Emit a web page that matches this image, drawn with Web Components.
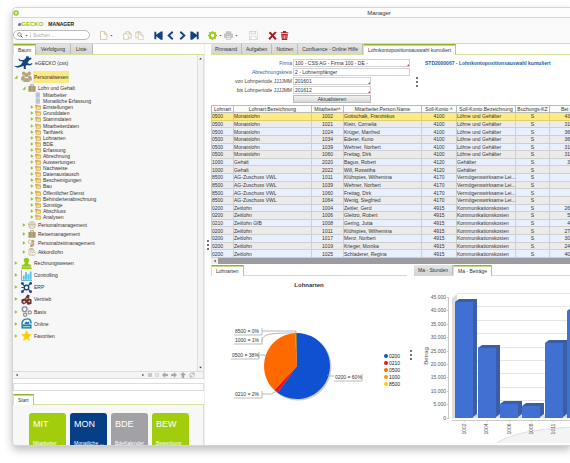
<!DOCTYPE html>
<html lang="de">
<head>
<meta charset="utf-8">
<title>Manager</title>
<style>
html,body{margin:0;height:100%}
body{font:5px/6px "Liberation Sans",Arial,sans-serif;color:#333;background:#fff;overflow:hidden;
 --green:#a2cd0c;--line:#d5e39a;--navy:#14437f;--grey:#d9d9d9}
</style>
</head>
<body>
<gecko-manager></gecko-manager>
<script>
const define=(name,html,setup)=>customElements.define(name,class extends HTMLElement{
  constructor(){super();this.attachShadow({mode:'open'})}
  connectedCallback(){
    if(this.ready)return;this.ready=true;
    this.shadowRoot.innerHTML='<style>*{box-sizing:border-box}button,input{font:inherit;color:inherit;margin:0;padding:0;border-radius:0}[hidden]{display:none}</style>'+(typeof html==='function'?html(this):html);
    if(setup)setup(this);
  }
});

const N='fill="#14437f"',T='#b5a67c';
const ICONS={
  logo:'<circle cx="12" cy="12" r="11" fill="#8fc31f"/><circle cx="12" cy="12" r="4.5" fill="#eef7d4"/><path d="M12 3v4M12 17v4M3 12h4M17 12h4" stroke="#d6ec98" stroke-width="3"/>',
  search:'<circle cx="10" cy="10" r="7" fill="none" stroke="#555" stroke-width="2.5"/><path d="M15 15l7 7" stroke="#555" stroke-width="4"/>',
  caret:'<path d="M3 8h18l-9 10z" fill="#555"/>',
  doc:'<path d="M4 1h10l7 8v14H4zM14 1v8h7" fill="#fff" stroke="#c5b586" stroke-width="1.8"/>',
  copy:'<path d="M2 7h7l5 5v10H2z" fill="#fff" stroke="#c5b586" stroke-width="1.8"/><path d="M8 7V2h8l6 6v11h-8M16 2v6h6" fill="none" stroke="#c5b586" stroke-width="1.8"/>',
  paste:'<path d="M9 18H2V3h14v4M6 1h6v4H6z" fill="none" stroke="#cfc4a2" stroke-width="1.8"/><path d="M9 8h7l6 5v10H9zM16 8v5h6" fill="#fff" stroke="#cfc4a2" stroke-width="1.8"/>',
  first:`<path d="M1 2h5v8L18 1h5v22h-5L6 14v8H1z" ${N}/>`,
  prev:'<path d="M18 2L7 12l11 10" fill="none" stroke="#14437f" stroke-width="5"/>',
  next:'<path d="M6 2l11 10L6 22" fill="none" stroke="#14437f" stroke-width="5"/>',
  last:`<path d="M23 2h-5v8L6 1H1v22h5l12-9v8h5z" ${N}/>`,
  gear:'<circle cx="12" cy="12" r="7" fill="none" stroke="#9acb10" stroke-width="5"/><path d="M12 0v5M12 19v5M0 12h5M19 12h5M3.500 3.500l4 4M16.500 16.500l4 4M3.500 20.500l4-4M16.500 7.500l4-4" stroke="#9acb10" stroke-width="4"/>',
  print:'<path d="M6 8V2h12v6M6 17H1V8h22v9h-5" fill="#ccc" stroke="#b5b5b5" stroke-width="2"/><path d="M6 13h12v9H6zM8 17h8" fill="#fff" stroke="#aaa" stroke-width="1.700"/>',
  save:'<path d="M1 1h18l4 4v18H1zM6 1v7h11V1M5 23v-9h14v9" fill="#fff" stroke="#c6c6c6" stroke-width="1.800"/>',
  cross:'<path d="M2 5l4-4 6 7 7-7 4 3-8 8 8 8-4 4-7-8-7 8-4-4 8-8z" fill="#a8141c"/>',
  trash:'<path d="M3 8h18l-2 16H5zM2 3h20v3H2zM8 0h8v3H8z" fill="#b01e26"/><path d="M8 11v10M12 11v10M16 11v10" stroke="#fff" stroke-width="1.500"/>',
  gecko:'<path d="M0 19c5 2 10 1 14-2l4-6-7-1-2-4 1-1 3 3 6 0 4-3 2-5 2 1 2-1 1 4 4-1 1 3-5 3-3 5 5 2 4-2 1 2-5 3-7-1-2 4 1 4-3 1-2-3 1-4-5 1c-5 3-11 3-15-2z" fill="#17457f"/>',
  people:`<g fill="${T}"><circle cx="6" cy="5" r="4"/><circle cx="18" cy="5" r="4"/><circle cx="12" cy="9" r="4.500"/><path d="M0 20c0-6 2-10 6-10l3 4-4 7zM24 20c0-6-2-10-6-10l-3 4 4 7zM5 24c0-6 2-9 7-9s7 3 7 9z"/></g>`,
  bag:`<path d="M1 6h22v17H1z" fill="${T}"/><path d="M8 6V2h8v4M6 6v17M18 6v17" fill="none" stroke="#8f825c" stroke-width="2"/>`,
  page:'<path d="M4 3h14v18H4z" fill="#dce5ef" stroke="#8fa0b5" stroke-width="2"/><path d="M7 8h8M7 12h8M7 16h8" stroke="#6682a5" stroke-width="1.800"/>',
  folder:'<path d="M1 4h8l3 3h10v14H5z" fill="#e3b250" stroke="#b8862e" stroke-width="1.500"/><path d="M6 10h17l-3 12H5z" fill="#f7dc8c" stroke="#c5963d"/>',
  team:`<g fill="none" stroke="${T}" stroke-width="2"><circle cx="12" cy="12" r="10.500"/><circle cx="12" cy="8" r="3"/><circle cx="6" cy="11" r="2"/><circle cx="18" cy="11" r="2"/><path d="M6 20c1-8 11-8 12 0"/></g>`,
  time:`<circle cx="14" cy="7" r="5" fill="${T}"/><path d="M6 24c0-10 5-12 13-11v6l-6 5z" fill="${T}"/><circle cx="6" cy="8" r="5" fill="#fff" stroke="${T}" stroke-width="2"/>`,
  clip:`<path d="M3 3h14v18H3zM7 1h6v4H7z" fill="#fff" stroke="${T}" stroke-width="2"/><circle cx="17" cy="17" r="5" fill="#fff" stroke="${T}" stroke-width="2"/><path d="M6 9h8M6 13h5" stroke="${T}" stroke-width="2"/>`,
  stamp:'<path d="M12 0c7 0 7 6 4 10-1 3 0 4 6 5v4H2v-4c6-1 7-2 6-5C5 6 5 0 12 0zM1 20h22v4H1z" fill="#94c90d"/>',
  chart:'<path d="M1 0v23h23" fill="none" stroke="#45b8dc" stroke-width="2"/><path d="M4 12h4v9H4zM9 5h4v16H9zM14 9h4v12h-4zM19 3h4v18h-4z" fill="#58c1e2"/>',
  erp:'<path d="M2 3l7 7M22 2l-7 7M2 22l7-7M22 22l-7-7M1 12h5" stroke="#1d4386" stroke-width="2.500"/><circle cx="12" cy="12" r="5" fill="#fff" stroke="#1d4386" stroke-width="3"/><g fill="#1d4386"><circle cx="3" cy="3" r="3"/><circle cx="21" cy="3" r="3"/><circle cx="3" cy="21" r="3"/><circle cx="21" cy="21" r="3"/></g>',
  sales:'<path d="M1 12l8-3 5-8 5 2-2 6 6 3v9l-8 3-3-5-6 4-5-4z" fill="#6b2f2a"/><circle cx="7" cy="17" r="2.500" fill="#e5d2ce"/><circle cx="18" cy="16" r="2" fill="#e5d2ce"/><path d="M10 11l6-1" stroke="#fff" stroke-width="1.500"/>',
  gears:'<g fill="none" stroke="#8b8f94" stroke-width="2.500"><circle cx="8" cy="7" r="5"/><circle cx="19" cy="14" r="3.500"/><circle cx="9" cy="19" r="3.500"/></g><circle cx="8" cy="7" r="7" fill="none" stroke="#8b8f94" stroke-width="1.500" stroke-dasharray="2 2"/>',
  online:'<path d="M2 14C2 4 8 2 14 2c5 0 8 4 8 10" fill="none" stroke="#1580a8" stroke-width="3"/><path d="M1 14h22v9H1z" fill="#1580a8"/><path d="M7 13l4-6 3 3 4-3v6" fill="#1580a8"/><path d="M4 19h16" stroke="#d6eef6" stroke-width="2"/>',
  star:'<path d="M12 0l3.600 8.500 8.400.7-6.500 5.800L19.600 24 12 19l-7.600 5 2.100-9L0 9.200l8.400-.7z" fill="#fdd000"/>',
  left:'<path d="M1 12L11 2v6h12v8H11v6z" fill="#aaa" stroke="#888"/>',
  right:'<path d="M23 12L13 2v6H1v8h12v6z" fill="#aaa" stroke="#888"/>',
  up:'<path d="M12 1l10 11h-6v11H8V12H2z" fill="#aaa" stroke="#888"/>',
  sync:'<path d="M7 20C0 14 3 4 12 3M17 4c7 6 4 14-3 17M9 14v7H3M15 10V3h6" fill="none" stroke="#999" stroke-width="2.500"/>',
  plus:'<path d="M3 3h18v18H3zM7 12h10M12 7v10" fill="#ddd" stroke="#888" stroke-width="2"/>',
  minus:'<path d="M3 3h18v18H3zM7 12h10" fill="#eee" stroke="#aaa" stroke-width="2"/>',
  triL:'<path d="M16 4v16L6 12z" fill="#333"/>',triR:'<path d="M8 4v16l10-8z" fill="#333"/>',
  triU:'<path d="M2 19h20L12 5z" fill="#333"/>',triD:'<path d="M2 5h20l-10 14z" fill="#333"/>',
  closed:'<path d="M5 1v22l16-11z" fill="#8fc31f"/>',open:'<path d="M21 2v20H2z" fill="#8fc31f"/>'
};
define('g-icon',el=>{
  const n=el.getAttribute('name');
  return `<style>:host{display:block;flex:none;width:6px;height:6px}svg{display:block;width:100%;height:100%}</style><svg viewBox="0 0 ${n==='gecko'?36:24} ${n==='gecko'?26:24}" aria-hidden="true">${ICONS[n]}</svg>`;
});

define('tool-button',el=>`<style>:host{display:flex;align-items:center}button{border:0;background:none;width:12px;height:12px;display:grid;place-items:center}
 g-icon{width:9px;height:9px}.c{width:4px}.c g-icon{width:3px;height:3px}</style>
 <button aria-label="${el.getAttribute('label')}"><g-icon name="${el.getAttribute('icon')}"></g-icon></button>${el.hasAttribute('menu')?'<button class="c" aria-label="Menü"><g-icon name="caret"></g-icon></button>':''}`);

define('tab-bar',el=>{
  const a=+el.getAttribute('active');
  return `<style>:host{display:block;flex:none}div{display:flex;height:11px;border-bottom:1px solid var(--line)}
  button{border:0;border-right:1px solid #bbb;background:linear-gradient(#e4e4e4,#d4d4d4);padding:0 var(--tp,4px);height:10px;white-space:nowrap;color:#333}
  .on{background:#fff;border-top:1px solid #8fb52a;border-left:1px solid #ddd;height:11px;padding:0 4px;box-shadow:inset 0 1px #c5d98b}</style>
  <div role="tablist">${el.getAttribute('tabs').split('|').map((t,i)=>`<button role="tab" aria-selected="${i===a}" class="${i===a?'on':''}">${t}</button>`).join('')}</div>`;
});

define('tree-node',el=>{
  const s=el.getAttribute('state');
  return `<style>:host{display:flex;align-items:center;min-height:0;white-space:nowrap}
  .t{width:4px;height:4px;margin-right:var(--tg,4px);visibility:${s?'visible':'hidden'}}
  .i{width:var(--is,6px);height:var(--is,6px);margin-right:2px}
  :host([wide]) .i{width:20px;height:13px}:host([wide]) .t{display:none}
  span{line-height:6px}:host([selected]) span{background:#fbe983;line-height:12px;margin-left:-1px;padding:0 1px}</style>
  <g-icon class="t" name="${s||'closed'}"></g-icon><g-icon class="i" name="${el.getAttribute('icon')}"></g-icon><span><slot></slot></span>`;
});

const list=(items)=>items.map(([i,t,s='closed'])=>`<tree-node icon="${i}" state="${s}">${t}</tree-node>`).join('');
define('nav-tree',`<style>:host{display:flex;flex:1;min-height:0;background:#f7f7f7}
 .m{flex:1;min-width:0;overflow:hidden;border-right:1px solid #ddd}
 .v{width:6px;display:flex;flex-direction:column;justify-content:space-between;align-items:center;padding:2px 0;background:#f3f3f3;border-right:1px solid #ddd}
 .v g-icon{width:3px;height:3px}
 .a{display:grid;grid-auto-rows:1fr}
 .root{height:15px;--is:12px}.l1{padding-left:1px;--is:11px;--tg:3px}.one{height:13px}.l2{padding-left:9px;--is:8px;--tg:2px}.lg{height:9px}
 .l3{height:128px;padding-left:17px;--is:6px;--tg:1px}.l2b{height:37px}.l1b{height:85px}</style>
 <div class="m">
 <tree-node class="root" icon="gecko" wide>eGECKO (css)</tree-node>
 <tree-node class="l1 one" icon="people" state="open" selected>Personalwesen</tree-node>
 <tree-node class="l2 lg" icon="bag" state="open">Lohn und Gehalt</tree-node>
 <div class="a l3">${list([['page','Mitarbeiter',''],['page','Monatliche Erfassung',''],...'Einstellungen,Grunddaten,Stammdaten,Mitarbeiterdaten,Tarifwerk,Lohnarten,BDE,Erfassung,Abrechnung,Auswertungen,Nachweise,Datenaustausch,Bescheinigungen,Bau,Öffentlicher Dienst,Behindertenabrechnung,Sonstige,Abschluss,Analysen'.split(',').map(t=>['folder',t])])}</div>
 <div class="a l2 l2b">${list([['team','Personalmanagement'],['bag','Reisemanagement'],['time','Personalzeitmanagement'],['clip','Akkordlohn']])}</div>
 <div class="a l1 l1b">${list([['stamp','Rechnungswesen'],['chart','Controlling'],['erp','ERP'],['sales','Vertrieb'],['gears','Basis'],['online','Online'],['star','Favoriten']])}</div>
 </div><div class="v"><g-icon name="triU"></g-icon><g-icon name="triD"></g-icon></div>`);

define('start-tile',`<style>:host{display:flex;flex-direction:column;justify-content:space-between;width:37px;height:33px;padding:6px 3px 0 4px;box-sizing:border-box;border-radius:3px 3px 0 0;background:var(--tile,#a2cd0c);color:#fff;overflow:hidden;white-space:nowrap}
 b{font:9px/10px "Liberation Sans",Arial,sans-serif}</style><b><slot name="code"></slot></b><span><slot></slot></span>`);

define('drag-dots',`<style>:host{display:grid;place-content:center;gap:2px}i{width:2px;height:2px;background:#444;border-radius:1px}</style><i></i><i></i><i></i>`);

define('form-row',el=>`<style>:host{display:flex;align-items:center;height:8px}label{width:81px;text-align:right;margin-right:1px;white-space:nowrap;color:var(--lc,#444)}
 div{position:relative;width:var(--w,117px)}input{display:block;width:100%;height:8px;border:1px solid #d2d2d2;padding:0 1px;background:#fff;color:#333;outline:0}
 i{position:absolute;right:1px;bottom:1px;border:1px solid #d33;border-top-color:transparent;border-left-color:transparent}</style>
 <label for="f">${el.getAttribute('label')}</label><div><input id="f" value="${el.getAttribute('value')}">${el.hasAttribute('required')?'<i></i>':''}</div>`);

const LG='Löhne und Gehälter',VL='Vermögenswirksame Lei...',KK='Kommunikationskosten';
const ROWS=[
 ['0500','Monatslohn','1002','Gottschalk, Franziskus','4100',LG,'43'],['0500','Monatslohn','1021','Klein, Cornelia','4100',LG,'31'],
 ['0500','Monatslohn','1024','Krüger, Manfred','4100',LG,'36'],['0500','Monatslohn','1034','Ederer, Kuno','4100',LG,'36'],
 ['0500','Monatslohn','1039','Wehner, Norbert','4100',LG,'31'],['0500','Monatslohn','1060','Freitag, Dirk','4100',LG,'31'],
 ['1000','Gehalt','2020','Bagus, Robert','4120','Gehälter','3'],['1000','Gehalt','2022','Will, Roswitha','4120','Gehälter',''],
 ['8500','AG-Zuschuss VWL','1011','Klühspies, Wilhemina','4170',VL,''],['8500','AG-Zuschuss VWL','1039','Wehner, Norbert','4170',VL,''],
 ['8500','AG-Zuschuss VWL','1060','Freitag, Dirk','4170',VL,''],['8500','AG-Zuschuss VWL','1064','Wenig, Siegfried','4170',VL,''],
 ['0200','Zeitlohn','1004','Zeitler, Gerd','4915',KK,'26'],['0200','Zeitlohn','1006','Gleitzo, Robert','4915',KK,'5'],
 ['0210','Zeitlohn GfB','1008','Gering, Jutta','4915',KK,'4'],['0200','Zeitlohn','1011','Klühspies, Wilhemina','4915',KK,'27'],
 ['0200','Zeitlohn','1017','Menz, Norbert','4915',KK,'30'],['0200','Zeitlohn','1019','Krieger, Monika','4915',KK,'24'],
 ['0200','Zeitlohn','1025','Schladerer, Regina','4915',KK,'40']];
define('wage-table',`<style>:host{display:block;flex:none}
 table{table-layout:fixed;width:100%;height:153px;border-collapse:separate;border-spacing:0}
 th,td{padding:0;border:0 solid #cfcfcf;border-right-width:1px;border-bottom-width:1px;white-space:nowrap;line-height:6px;font-weight:400;text-align:left}
 th{height:8px;text-align:center;border-color:#bbb;border-top-width:1px;background:#fbfbfb}
 th:first-child,td:first-child{border-left-width:1px}
 tr:nth-child(odd) td{background:#e9f0fd}tr:nth-child(even) td{background:#ebebeb}tbody tr:first-child td{background:#fcea82;border-color:#e2cf64}
 td:nth-child(3),td:nth-child(5),td:nth-child(7){text-align:center}td:last-child{text-align:right;border-right:0}th:last-child{text-align:left;padding-left:11px;border-right:0}
 .s{height:6px;background:#9b9ba0;display:flex;align-items:center}.s span{width:7px;height:6px;background:#eee;display:grid;place-items:center}.s g-icon{width:4px;height:4px}</style>
 <table><colgroup>${[23,78,32,78,35,59,34].map(w=>`<col style="width:${w}px">`).join('')}<col></colgroup>
 <thead><tr>${['Lohnart','Lohnart:Bezeichnung','Mitarbeiter˄','Mitarbeiter.Person.Name','Soll-Konto ˄','Soll-Konto.Bezeichnung','Buchungs-KZ','Bet'].map(h=>`<th scope="col">${h}</th>`).join('')}</tr></thead>
 <tbody>${ROWS.map(r=>`<tr>${[...r.slice(0,6),'S',r[6]].map(c=>`<td>${c}</td>`).join('')}</tr>`).join('')}</tbody></table>
 <div class="s"><span><g-icon name="triL"></g-icon></span></div>`);

/* Pie slices are given in percent, clockwise from the top. */
const slices=[[0,60,'#0f51d0'],[60,62,'#e8140c'],[62,99,'#ff6a00'],[99,99.600,'#e08a1a'],[99.600,100,'#5d6b2a']];
const at=p=>{const a=p/50*Math.PI;return `${297+33*Math.sin(a)} ${367-33*Math.cos(a)}`};
const tag=(x,y,t)=>`<path d="M${x-1} ${y+4}h28v-7" fill="none" stroke="#bbb"/><text x="${x}" y="${y+2}">${t}</text>`;
define('pie-panel',`<style>:host{display:flex;flex-direction:column;min-width:0}h2{margin:5px 0 0;font:bold 6px/8px "Liberation Sans",Arial,sans-serif;text-align:center;color:#333}
 .b{display:flex;justify-content:space-between;align-items:flex-start}svg{display:block;width:172px;height:152px;flex:none}text{font-size:5px;fill:#333}
 ul{list-style:none;margin:63px 7px 0 0;padding:0}li{display:flex;align-items:center;gap:1px;height:7px;color:#222}i{width:4px;height:4px;border-radius:2px}</style>
 <h2>Lohnarten</h2><div class="b"><svg viewBox="211 290 172 152" role="img" aria-label="Lohnarten">
 <circle cx="298" cy="368" r="33.500" fill="#ccc"/>
 ${slices.map(([a,b,c])=>`<path d="M297 367L${at(a)}A33 33 0 ${b-a>50?1:0} 1 ${at(b)}z" fill="${c}"/>`).join('')}
 <g fill="none" stroke="#999" stroke-width=".7"><path d="M262 332h34v3M262 343c0-8 6-9 34-9M260 356h4l4 2M262 395h9l6-3M327 376l3 1h4"/></g>
 ${tag(235,332,'8500 = 0%')}${tag(235,341,'1000 = 1%')}${tag(232,356,'0500 = 38%')}${tag(235,395,'0210 = 2%')}${tag(335,378,'0200 = 60%')}
 </svg><ul>${[['#0f51d0','0200'],['#f01010','0210'],['#ff6a00','0500'],['#ff9800','1000'],['#ffcf00','8500']].map(([c,t])=>`<li><i style="background:${c}"></i>${t}</li>`).join('')}</ul></div>`);

const bars=[[455,303],[478,349],[500,405],[522,407],[545,344],[567,312]];
define('bar-panel',`<style>:host{display:block;min-width:0;overflow:hidden}svg{display:block;width:156px;height:167px;overflow:visible}text{font-size:5px;fill:#555}.e{text-anchor:end}.m{text-anchor:middle}.l{font-size:6px}</style>
 <svg viewBox="414 277 156 167" role="img" aria-label="Beträge">
 <path d="M495 445c18-12 45-15 80-17v17z" fill="#f4f4f4" stroke="#e0e0e0"/>
 <path d="M452 299l5-4v120l-5 5z" fill="#ddd"/><path d="M452 419l5-4h120v4z" fill="#ddd"/>
 ${[...Array(10)].map((_,i)=>{const y=298+Math.round(i*13.400);return `<path d="M457 ${y-3.500}h120" stroke="#e6e6e6"/><path d="M447 ${y+.5}h2" stroke="#bbb"/><text class="e" x="446" y="${y+2}">${i===9?'0':(45-5*i)+'.000'}</text>`}).join('')}
 <path d="M448.500 298v121M452 421.500h125" stroke="#ccc" fill="none"/>
 ${bars.map(([x,y])=>`<path d="M${x} ${y}l4-3h18v${418-y}l-4 3z" fill="#3a5fa6"/><path d="M${x} ${y}h18v${419-y}h-18z" fill="#3f70d2"/>`).join('')}
 <text class="m l" transform="translate(428 357) rotate(-90)">Betrag</text>
 ${['1002','1004','1006','1008','1011'].map((t,i)=>`<path d="M${[464,487,509,531,553][i]}.500 422v1" stroke="#ccc"/><text class="m" transform="translate(${[466,488,511,533,555][i]} 430) rotate(-90)">${t}</text>`).join('')}
 </svg>`);

define('gecko-manager',`<style>
 :host{display:flex;min-height:100vh;padding:8px 0 18px 13px;box-sizing:border-box}
 main{flex:1;min-width:0;display:flex;flex-direction:column;background:#fff;border-radius:4px 0 0 4px;overflow:hidden;box-shadow:0 0 0 1px #d4d4d4,0 4px 9px 1px rgba(0,0,0,.26)}
 .title{display:flex;align-items:center;height:10px;border-bottom:1px solid var(--line);background:#fdfdfd}
 .title h1{flex:1;font:6px/8px "Liberation Sans",Arial,sans-serif;margin:0 0 0 169px;text-align:center;color:#333}
 .head{background:#f9f9f9;height:26px;border-bottom:1px solid var(--line);display:flex;flex-direction:column;justify-content:space-between}
 .brand{margin-left:5px;padding-top:2px;font:bold 6px/8px "Liberation Sans",Arial,sans-serif;color:#222;display:flex;gap:5px}
 .brand em{font-style:normal;color:#94c41c}.brand em::first-letter{color:#14437f}
 .brand small{font-size:5px}
 .tools{display:flex;align-items:center;height:12px;margin-bottom:2px}
 .group{display:flex}
 .search{display:flex;align-items:center;width:77px;height:10px;border:1px solid #bbb;border-radius:5px;background:#fff;padding-left:3px;gap:2px;margin-right:7px}
 .search .c{width:3px;height:3px}input{flex:1;min-width:0;width:20px;border:0;background:none;outline:0;margin-right:6px;border-left:1px solid #ddd;padding-left:2px}input::placeholder{color:#aaa}
 .cols{flex:1;min-height:0;display:flex}
 .left{width:191px;display:flex;flex-direction:column;flex:none;--tp:5px}
 .hs{height:8px;display:flex;align-items:center;gap:3px;background:#f4f4f4;border:1px solid #ddd;border-width:1px 1px 1px 0;padding:0 8px 0 2px}
 .hs g-icon{width:6px;height:6px}.hs .s{width:4px;height:4px}.hs .f{flex:1}
 .box{height:8px;border:1px solid #ddd;margin:4px 0 3px;background:#fff}
 .tiles{height:40px;box-sizing:border-box;background:#f7f7f7;border-right:1px solid #ddd;display:flex;gap:4px;padding:8px 0 0 16px;overflow:hidden}
 .split{width:7px;flex:none;box-shadow:inset 1px 0 #eee;}
 .right{flex:1;min-width:0;display:flex;flex-direction:column}
 .form{display:flex;height:50px;box-sizing:border-box;padding-top:4px}
 .fields{display:grid;grid-auto-rows:8px;row-gap:1px;width:199px}
 .fields button{width:78px;margin-left:82px;height:8px;border:1px solid #bbb;background:linear-gradient(#f2f2f2,#d8d8d8);line-height:6px}
 .b{--lc:#2f62a8}.h{--w:78px}
 .dots{width:14px}.std{font-weight:700;color:#2a5ca8;padding:1px 0 0 1px;white-space:nowrap}
 .charts{flex:1;display:flex;margin-top:1px;min-height:0;overflow:hidden}
 .pie{width:196px;flex:none}.bar{flex:1;min-width:0}
 </style>
 <main>
 <div class="title"><g-icon name="logo"></g-icon><h1>Manager</h1></div>
 <header class="head"><div class="brand"><em>eGECKO</em><small>MANAGER</small></div>
 <div class="tools"><div class="search"><g-icon name="search"></g-icon><g-icon class="c" name="caret"></g-icon><input aria-label="Suchen" placeholder="Suchen ..."></div>
 <tool-button icon="doc" label="Neu" menu style="margin-right:8px"></tool-button>
 <tool-button icon="copy" label="Kopieren"></tool-button><tool-button icon="paste" label="Einfügen" style="margin-right:7px"></tool-button>
 <tool-button icon="first" label="Erster"></tool-button><tool-button icon="prev" label="Zurück"></tool-button><tool-button icon="next" label="Weiter"></tool-button><tool-button icon="last" label="Letzter" style="margin-right:6px"></tool-button>
 <tool-button icon="gear" label="Einstellungen" menu></tool-button><tool-button icon="print" label="Drucken" menu style="margin-right:9px"></tool-button>
 <tool-button icon="save" label="Speichern" style="margin-right:7px"></tool-button><tool-button icon="cross" label="Abbrechen"></tool-button><tool-button icon="trash" label="Löschen"></tool-button></div></header>
 <div class="cols">
 <div class="left"><tab-bar tabs="Baum|Verfolgung|Liste" active="0"></tab-bar><nav-tree></nav-tree>
 <div class="hs"><g-icon class="s" name="triL"></g-icon><span class="f"></span><g-icon class="s" name="triR"></g-icon><g-icon class="s" name="plus"></g-icon><g-icon class="s" name="minus"></g-icon><g-icon name="left"></g-icon><g-icon name="right"></g-icon><g-icon name="up"></g-icon><g-icon name="sync"></g-icon></div>
 <div class="box"></div><tab-bar tabs="Start" active="0"></tab-bar>
 <div class="tiles"><start-tile><span slot="code">MIT</span>Mitarbeiter</start-tile><start-tile style="--tile:#063f86"><span slot="code">MON</span>Monatliche ...</start-tile><start-tile style="--tile:#a1a1a6"><span slot="code">BDE</span>BdeKalender</start-tile><start-tile><span slot="code">BEW</span>Bewerbung</start-tile></div>
 </div>
 <drag-dots class="split"></drag-dots>
 <div class="right"><tab-bar tabs="Pinnwand|Aufgaben|Notizen|Confluence - Online Hilfe|Lohnkontopositionsauswahl kumuliert" active="4"></tab-bar>
 <div class="form"><div class="fields">
 <form-row class="b" label="Firma" value="100 - CSS AG - Firma 100 - DE -" required></form-row>
 <form-row class="b" label="Abrechnungskreis" value="2 - Lohnempfänger"></form-row>
 <form-row class="h" label="von Lohnperiode JJJJMM" value="201601" required></form-row>
 <form-row class="h" label="bis Lohnperiode JJJJMM" value="201612" required></form-row>
 <button>Aktualisieren</button></div><drag-dots class="dots"></drag-dots><div class="std">STD2000067 - Lohnkontopositionsauswahl kumuliert</div></div>
 <wage-table></wage-table>
 <div class="charts"><div class="pie"><tab-bar tabs="Lohnarten" active="0"></tab-bar><pie-panel></pie-panel></div><drag-dots class="split" style="box-shadow:none"></drag-dots>
 <div class="bar"><tab-bar tabs="Ma - Stunden|Ma - Beträge" active="1"></tab-bar><bar-panel></bar-panel></div></div>
 </div></div></main>`);
</script>
</body>
</html>
